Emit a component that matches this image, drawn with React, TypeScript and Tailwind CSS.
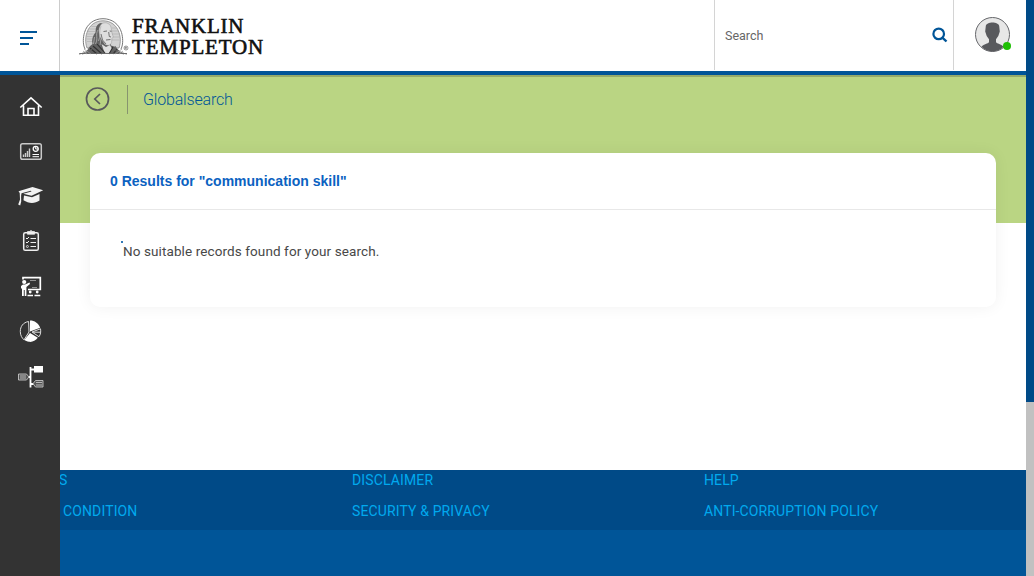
import React from "react";

function Portrait() {
  return (
    <svg width="50" height="38" viewBox="79 17 50 38" className="shrink-0" fill="none">
      <path d="M85 49C82.500 44 83.200 37 84.500 32.500C87 24 94 18.700 103 18.700S119 24 121.500 32.500C122.800 37 123.500 44 121 49" stroke="#777" strokeWidth="1" />
      <path d="M87 48C85 42 85.500 37 87 32.500C89.500 25 95.500 20.800 103 20.800S116.500 25 119 32.500C120.500 37 121 42 119 48Z" fill="#d2d2d2" stroke="#888" strokeWidth=".8" />
      <path d="M87 34H99M86.500 36.500H98M86.500 39H97M87 41.500H97M88 31.500H99M89.500 29H98M91.500 26.500H99M112 28H116.500M112 31H118M112 34H119M112 37H119.500M112 40H119.500" stroke="#b2b2b2" strokeWidth=".7" />
      <path d="M101 23C96 24 95.500 29 95.700 32C92.500 36 91.500 40 92.500 44C89 46.500 87 50 86 54H120C119.500 49 115.500 46.500 111 45.500L110 38L103 24Z" fill="#626262" />
      <path d="M101 24.500C104 21.500 109.500 22.500 111 27L112 33L113.300 37L111.900 38.500L111.600 42.500C110.500 45.500 107.500 46 105 44.500L100.500 38C98.500 33 98 28 101 24.500Z" fill="#dedede" stroke="#888" strokeWidth=".4" />
      <path d="M103.500 31.500L107 31M109.700 31L111.500 31.300M108.700 32L109.300 36.500L111 37M106 40L110.500 39.500M101 34L102.500 40L106 44" stroke="#555" strokeWidth=".8" />
      <path d="M101 26C98.500 32 101 36 98.500 41M98 30C95 35 98.500 38 95.500 44M94.500 37L93.500 44M101 39L100 45" stroke="#b2b2b2" strokeWidth=".8" />
      <path d="M101.500 44L106 47L110 45L112 49L108.500 54H105Z" fill="#dedede" />
      <path d="M93 46L102 54M90 48L97 54M97 44L105 53M113 47L109 54M117 49L113 54" stroke="#303030" strokeWidth="1.100" />
      <path d="M79 54C86 53 89 50 91 46M82 54C87 53 91 51 93 48M127 54C120 53 117 50 115 46M124 54C119 53 116 51 113 48M79.500 53.500H127" stroke="#666" strokeWidth=".9" />
      <path d="M84 49L91 54M83 51L87 54M122 49L115 54M123 51L119 54" stroke="#999" strokeWidth=".8" />
      <circle cx="126" cy="48" r="2" stroke="#555" strokeWidth=".6" />
      <path d="M125.300 49V47H126.300L126.500 48H125.500L126.800 49" stroke="#555" strokeWidth=".5" />
    </svg>
  );
}

const iconClass = "h-[45px] w-[60px]";

function Sidebar() {
  return (
    <nav className="flex w-[60px] shrink-0 flex-col bg-[#333333] pt-[9px] text-white">
      <svg className={iconClass} viewBox="0 84 60 45" fill="none" stroke="currentColor">
        <path d="M20.300 107.500L31 97.800L41.700 107.500M23.500 105.500V115.300H38.500V105.500M28 115V108.500H34V115" strokeWidth="1.600" />
      </svg>
      <svg className={iconClass} viewBox="0 129 60 45" fill="none" stroke="currentColor">
        <rect x="20.700" y="143.700" width="20.600" height="15.600" rx="1.800" strokeWidth="1.500" stroke="#c9c9c9" />
        <path d="M23.500 157V154.500M25.500 157V153M27.500 157V151M29.500 157V148.500" strokeWidth="1.400" stroke="#cccccc" />
        <circle cx="35.700" cy="148.800" r="2.500" strokeWidth="1.300" />
        <path d="M35.700 146V149H38.500M32.500 154.500H39M32.500 156.700H39" strokeWidth="1" />
      </svg>
      <svg className={iconClass} viewBox="0 174 60 45" fill="#f2f2f2">
        <path d="M18.500 191.300L32.500 187L43.200 190.300L31.500 195.800L23.300 193.800L31.500 191.500L30.800 190.800L21.500 193.200C20.800 196 21.300 198 21.200 201.500L20.200 205.500L18.200 204.500L20 199.500L19.700 193Z" />
        <path d="M24 195.500L32 197.300L39.500 194V200.500C35 203.800 28.500 203.600 23.500 200.300Z" />
      </svg>
      <svg className={iconClass} viewBox="0 219 60 45" fill="none" stroke="#eeeeee">
        <rect x="23.700" y="232.700" width="14.600" height="17.600" rx="1.600" strokeWidth="1.500" />
        <rect x="27.700" y="231.700" width="6.600" height="2.400" fill="#eeeeee" />
        <path d="M30 231.500L31 230.300L32 231.500" />
        <path d="M26 238L27 239L29 237M30.500 238.500H36M26 242L27 243L29 241M30.500 242.500H36M30.500 246.500H36" strokeWidth="1" />
        <circle cx="27.400" cy="246.500" r="1" strokeWidth=".8" />
      </svg>
      <svg className={iconClass} viewBox="0 264 60 45" fill="none" stroke="currentColor">
        <path d="M23 279.500V277.700H40.300V289.500H28" strokeWidth="1.700" />
        <circle cx="24.200" cy="282" r="2.100" fill="currentColor" stroke="none" />
        <path d="M21 286L23 284.500H25L29.500 282.500L30 284L26.400 287V296H24.700V290H23.800V296H22V289L21 288Z" fill="currentColor" stroke="none" />
        <path d="M30 280.500H36M32 287.500H37" strokeWidth=".8" stroke="#aaa" />
        <circle cx="30.200" cy="292" r="1.400" fill="currentColor" stroke="none" />
        <circle cx="37.200" cy="292" r="1.400" fill="currentColor" stroke="none" />
        <path d="M27.500 295.500H33M34.500 295.500H40.300" strokeWidth="1.500" />
      </svg>
      <svg className={iconClass} viewBox="0 309 60 45" fill="none" stroke="#dddddd">
        <path d="M28.600 321.500C23 322.500 20.300 326.500 20.300 331.500C20.300 335.500 22 338 24 339.800L29 332Z" strokeWidth="1" />
        <path d="M30 320.500C34.500 320.500 38.500 323.200 40.200 327.800L30 331.500Z" fill="white" stroke="none" />
        <path d="M30 333L37.800 337.800C35.500 341 32 342.300 29 341.800C27 341.500 25.500 340.800 24.300 340Z" fill="white" stroke="none" />
        <path d="M32 332L40.500 328.800C41 331.500 40.700 334.500 39 336.700Z" strokeWidth="1" />
        <path d="M33 332.200H40.500" strokeWidth="1" />
      </svg>
      <svg className={iconClass} viewBox="0 354 60 45" fill="none" stroke="#c4c4c4">
        <path d="M30.500 367V387.500M31 369.500H34M28 377H31M31 384H34" stroke="white" strokeWidth="1.800" />
        <rect x="34" y="366" width="9" height="6.500" fill="white" stroke="none" />
        <path d="M18.500 374H26.500L29 377L26.500 380H18.500ZM35.500 380.500H43V387H35.500L33 383.700Z" strokeWidth=".9" fill="#555" />
        <path d="M20 376H26M20 378H26M36 382.500H42M36 385H42" strokeWidth=".9" />
      </svg>
    </nav>
  );
}

function Header() {
  return (
    <header className="flex h-[71px] shrink-0 bg-white">
      <button aria-label="Menu" className="flex h-[71px] w-[60px] flex-col gap-[4px] border-r border-[#cccccc] pl-5 pt-[31px]">
        <span className="h-[2px] w-[17px] bg-[#005598]" />
        <span className="h-[2px] w-[13px] bg-[#005598]" />
        <span className="h-[2px] w-[9px] bg-[#005598]" />
      </button>
      <div className="flex flex-1 pl-[19px] pt-[17px]">
        <Portrait />
        <div className="ml-[3px] flex flex-col whitespace-nowrap font-['Liberation_Serif',serif] text-[21px] leading-[21px] text-[#111111] [-webkit-text-stroke:0.6px_#111111]">
          <span className="-mt-[1px] tracking-[0.75px]">FRANKLIN</span>
          <span className="tracking-[0.85px]">TEMPLETON</span>
        </div>
      </div>
      <div className="flex h-[70px] w-[240px] items-center justify-between border-x border-[#d4d4d4] pl-[10px] pr-[5px]">
        <span className="pt-[2px] text-[12.500px] text-[#666666]">Search</span>
        <svg width="16" height="16" viewBox="0 0 16 16" fill="none" stroke="#005598">
          <circle cx="6.700" cy="6.900" r="5.300" strokeWidth="2.200" />
          <path d="M10.600 10.800L14.500 14.500" strokeWidth="2.400" />
        </svg>
      </div>
      <div className="w-[72px] pl-[21px] pt-[16px]">
        <svg width="38" height="37" viewBox="975 16 38 37">
          <circle cx="992.500" cy="34.500" r="17" fill="#e7e7e7" stroke="#66676b" />
          <path d="M985.800 26C986.200 21.300 998.800 21.300 999.200 26L999.800 31.500L998.300 36L996 39.300V42C997 44 1001 43.800 1003.500 46.800C997.500 53 987.500 53 981.500 46.800C984 43.800 988 44 989 42V39.300L986.700 36L985.200 31.500Z" fill="#58595d" />
          <circle cx="1007" cy="46" r="4" fill="#1fbf05" />
        </svg>
      </div>
    </header>
  );
}

export default function App() {
  return (
    <div className="flex h-[576px] w-[1034px] overflow-hidden bg-white font-['Roboto',sans-serif]">
      <div className="flex w-[1026px] shrink-0 flex-col">
        <Header />
        <div className="h-[4px] shrink-0 bg-[#005598]" />
        <div className="flex min-h-0 flex-1">
          <Sidebar />
          <div className="flex min-w-0 flex-1 flex-col">
            <main className="h-[395px]">
              <section className="h-[148px] border-t-2 border-[#95aa6a] bg-[#bad583]">
                <div className="flex h-[76px] items-start pl-[25px] pt-[8px]">
                  <svg width="26" height="26" viewBox="0 0 26 26" className="mt-[1px]" fill="none" stroke="#58595b">
                    <circle cx="12.500" cy="13" r="11" strokeWidth="1.700" />
                    <path d="M15 8L9.800 13L15 18" strokeWidth="1.700" />
                  </svg>
                  <div className="ml-4 h-[29px] w-px bg-[#87946f]" />
                  <h1 className="ml-[15px] text-[16px] font-light leading-[29px] tracking-[-0.18px] text-[#005598]">Globalsearch</h1>
                </div>
                <div className="mx-[30px] h-[154px] rounded-[10px] bg-white shadow-[0_0_16px_rgba(0,0,0,0.06)]">
                  <h2 className="flex h-[57px] items-center border-b border-[#e8e8e8] pl-5 font-['Liberation_Sans',sans-serif] text-[14px] font-bold text-[#0b62c1]">
                    0 Results for "communication skill"
                  </h2>
                  <div className="pl-[31px] pt-[31px]">
                    <div className="h-[2px] w-[2px] bg-[#337ab7]" />
                    <p className="-mt-px ml-[2px] text-[13.500px] leading-[18px] tracking-[0.1px] text-[#484848]">No suitable records found for your search.</p>
                  </div>
                </div>
              </section>
            </main>
            <footer className="flex flex-1 flex-col bg-[#005598]">
              <div className="flex h-[60px] overflow-hidden whitespace-nowrap bg-[#004a87] text-[14px] leading-[31px] tracking-[0.13px] text-[#00a9ee]">
                <div className="-mt-[5px] w-[292px] shrink-0">
                  <p className="-ml-px">S</p>
                  <p className="pl-[3px]">CONDITION</p>
                </div>
                <div className="-mt-[5px] w-[352px] shrink-0">
                  <p>DISCLAIMER</p>
                  <p>SECURITY &amp; PRIVACY</p>
                </div>
                <div className="-mt-[5px]">
                  <p>HELP</p>
                  <p>ANTI-CORRUPTION POLICY</p>
                </div>
              </div>
            </footer>
          </div>
        </div>
      </div>
      <div className="w-[8px] shrink-0 bg-[#c1c1c1]">
        <div className="h-[402px] bg-[#004a87]" />
      </div>
    </div>
  );
}
